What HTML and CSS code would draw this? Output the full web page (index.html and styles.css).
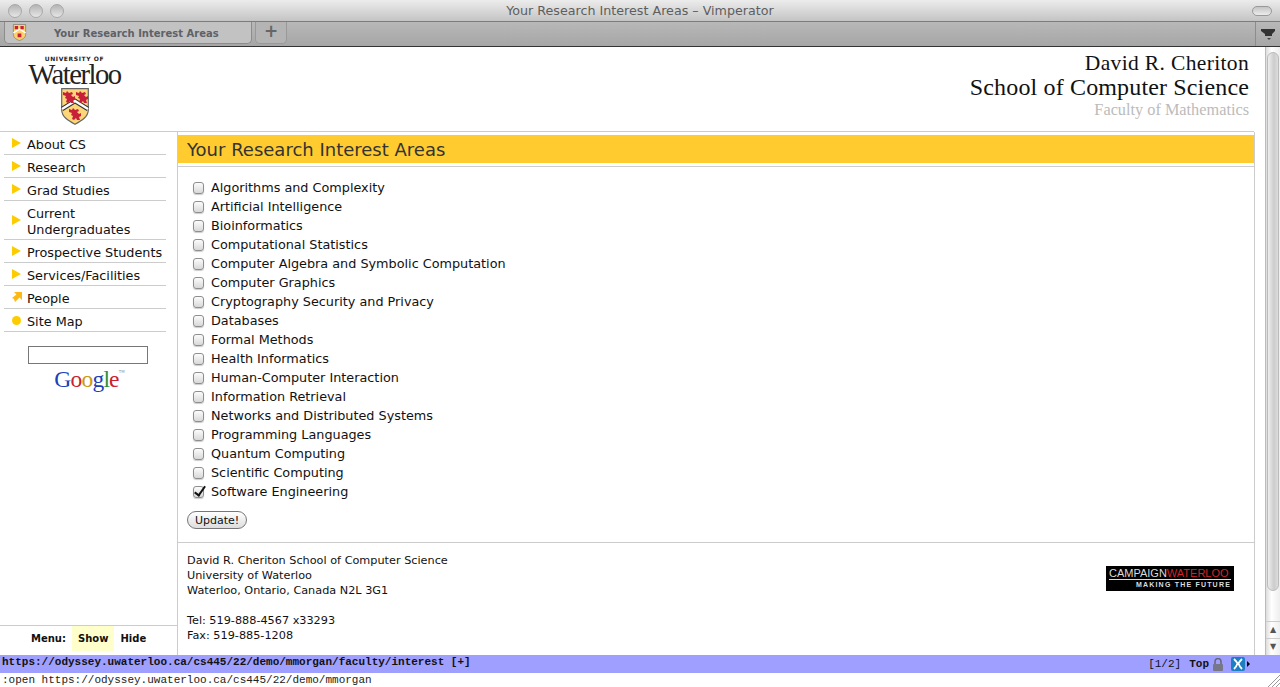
FILE: index.html
```html
<!DOCTYPE html>
<html lang="en">

<head>
    <meta charset="UTF-8">
    <title>Your Research Interest Areas - Vimperator</title>
    <link rel="stylesheet" href="styles.css">
</head>

<body>
    <!-- Window chrome -->
    <div class="titlebar">
        <div class="lights"><span></span><span></span><span></span></div>
        <div class="window-title">Your Research Interest Areas &ndash; Vimperator</div>
        <div class="pill"></div>
    </div>
    <div class="tabbar">
        <div class="tab">
            <svg class="tab-icon" width="15" height="17" viewBox="0 0 28 36">
                <path d="M1 1H27V22C27 29 20 33 14 35C8 33 1 29 1 22Z" fill="#fdd16c" stroke="#777" stroke-width="1.5"/>
                <path d="M1 19L14 11L27 19" fill="none" stroke="#fff" stroke-width="3"/>
                <path d="M4 4h7v7h-7zM16 4h7v7h-7zM10 20h8v8h-8z" fill="#c8203a"/>
            </svg>
            <span class="tab-label">Your Research Interest Areas</span>
        </div>
        <div class="tab-new">+</div>
        <div class="tab-spacer"></div>
        <div class="tab-menu">
            <svg width="15" height="14" viewBox="0 0 15 14"><path d="M0 1H14V3L11 6V8H4V6L0 3Z" fill="#333"/><path d="M6 10h4l-2 2z" fill="#444"/></svg>
        </div>
    </div>

    <div class="viewport">
        <div class="page">
            <!-- Header -->
            <header class="header">
                <div class="logo">
                    <div class="logo-top">UNIVERSITY OF</div>
                    <div class="logo-name">Waterloo</div>
                    <svg class="crest" width="28" height="37" viewBox="0 0 28 37">
                        <defs>
                            <path id="lion" d="M0 1l3 1 1-2 2 2 3-1 1 2-2 1 2 2 2-1 0 3-2 1 1 3-3 0-1-2-2 2-2-1 1-3-2-1 1-2-3-1z"/>
                        </defs>
                        <path d="M.7 .7H27.300V22C27.300 29 20 33 14 36.300C8 33 .7 29 .7 22Z" fill="#fdd678" stroke="#666" stroke-width="1.200"/>
                        <path d="M1 21L14 13L27 21" fill="none" stroke="#333" stroke-width="4.500"/>
                        <path d="M1 21L14 13L27 21" fill="none" stroke="#fff" stroke-width="2.400"/>
                        <use href="#lion" x="2" y="3" fill="#c8203a"/>
                        <use href="#lion" x="15" y="3" fill="#c8203a"/>
                        <use href="#lion" x="8" y="20" fill="#c8203a"/>
                    </svg>
                </div>
                <div class="school">
                    <div class="school-first">David R. Cheriton</div>
                    <div class="school-line">School of Computer Science</div>
                    <div class="faculty">Faculty of Mathematics</div>
                </div>
            </header>

            <div class="columns">
                <!-- Sidebar -->
                <aside class="sidebar">
                    <ul class="nav">
                        <li><span class="arrow"></span><a href="#">About CS</a></li>
                        <li><span class="arrow"></span><a href="#">Research</a></li>
                        <li><span class="arrow"></span><a href="#">Grad Studies</a></li>
                        <li class="nav-tall"><span class="arrow"></span><a href="#">Current Undergraduates</a></li>
                        <li><span class="arrow"></span><a href="#">Prospective Students</a></li>
                        <li><span class="arrow"></span><a href="#">Services/Facilities</a></li>
                        <li>
                            <svg class="nav-icon" width="10" height="10" viewBox="0 0 10 10"><path d="M2 0H10V8L7.500 5.500L3 10L2 7L0 6L4.500 2.500Z" fill="#fdb813"/></svg>
                            <a href="#">People</a>
                        </li>
                        <li><span class="dot"></span><a href="#">Site Map</a></li>
                    </ul>
                    <div class="search">
                        <input type="text" class="search-box">
                        <div class="google"><span class="g-b">G</span><span class="g-r">o</span><span class="g-y">o</span><span class="g-b">g</span><span class="g-g">l</span><span class="g-r">e</span><sup class="g-tm">TM</sup></div>
                    </div>
                    <div class="menu-toggle">
                        <span class="menu-label">Menu:</span>
                        <span class="menu-show">Show</span>
                        <span class="menu-hide">Hide</span>
                    </div>
                </aside>

                <!-- Main content -->
                <main class="content">
                    <h1 class="page-title">Your Research Interest Areas</h1>
                    <form class="areas">
                        <label><input type="checkbox">Algorithms and Complexity</label>
                        <label><input type="checkbox">Artificial Intelligence</label>
                        <label><input type="checkbox">Bioinformatics</label>
                        <label><input type="checkbox">Computational Statistics</label>
                        <label><input type="checkbox">Computer Algebra and Symbolic Computation</label>
                        <label><input type="checkbox">Computer Graphics</label>
                        <label><input type="checkbox">Cryptography Security and Privacy</label>
                        <label><input type="checkbox">Databases</label>
                        <label><input type="checkbox">Formal Methods</label>
                        <label><input type="checkbox">Health Informatics</label>
                        <label><input type="checkbox">Human-Computer Interaction</label>
                        <label><input type="checkbox">Information Retrieval</label>
                        <label><input type="checkbox">Networks and Distributed Systems</label>
                        <label><input type="checkbox">Programming Languages</label>
                        <label><input type="checkbox">Quantum Computing</label>
                        <label><input type="checkbox">Scientific Computing</label>
                        <label><input type="checkbox" checked>Software Engineering</label>
                        <button type="button" class="update">Update!</button>
                    </form>
                    <footer class="footer">
                        <div class="address">
                            David R. Cheriton School of Computer Science<br>
                            University of Waterloo<br>
                            Waterloo, Ontario, Canada N2L 3G1<br>
                            <br>
                            Tel: 519-888-4567 x33293<br>
                            Fax: 519-885-1208
                        </div>
                        <div class="campaign">
                            <div class="campaign-top">CAMPAIGN<b>WATERLOO</b></div>
                            <div class="campaign-sub">MAKING THE FUTURE</div>
                        </div>
                    </footer>
                </main>
            </div>
        </div>

        <!-- Scrollbar -->
        <div class="scrollbar">
            <div class="scroll-thumb"></div>
            <div class="scroll-btn">&#9650;</div>
            <div class="scroll-btn">&#9660;</div>
        </div>
    </div>

    <!-- Vimperator status and command lines -->
    <div class="statusbar">
        <span class="status-url">https://odyssey.uwaterloo.ca/cs445/22/demo/mmorgan/faculty/interest [+]</span>
        <span class="status-right">
            <span class="status-pos">[1/2]</span>
            <span class="status-top">Top</span>
            <svg width="10" height="13" viewBox="0 0 10 13"><path d="M2 6V3.500a3 3 0 0 1 6 0V6" fill="none" stroke="#667" stroke-width="1.500"/><rect y="6" width="10" height="7" rx="1" fill="#778"/></svg>
            <svg class="status-x" width="14" height="14" viewBox="0 0 14 14"><rect width="14" height="14" rx="2" fill="#1c7fc4"/><path d="M3 2C5 4 6 5 6.500 6.500C6 8 5 10 3 12M11 2C9 4 8 5 7.500 6.500C8 8 9 10 11 12" fill="none" stroke="#fff" stroke-width="1.800"/></svg>
            <span class="status-caret"></span>
        </span>
    </div>
    <div class="cmdline">
        <span>:open https://odyssey.uwaterloo.ca/cs445/22/demo/mmorgan</span>
        <svg class="grip" width="12" height="12" viewBox="0 0 12 12"><path d="M0 12L12 0M4 12L12 4M8 12L12 8" stroke="#999" fill="none"/></svg>
    </div>
</body>

</html>
```

FILE: styles.css
```css
/* Base styles */
html,
body {
    height: 100%;
}

body {
    margin: 0;
    display: flex;
    flex-direction: column;
    height: 687px;
    overflow: hidden;
    background-color: #fff;
    color: #111;
    font-family: "DejaVu Sans", Verdana, sans-serif;
}

/* Title bar */
.titlebar {
    height: 21px;
    flex: none;
    display: flex;
    align-items: center;
    justify-content: space-between;
    padding: 0 8px;
    background: linear-gradient(#ececec, #c4c4c4);
    border-bottom: 1px solid #7c7c7c;
}

.lights {
    display: flex;
    gap: 7px;
    width: 200px;
}

.lights span {
    width: 12px;
    height: 12px;
    border: 1px solid #a8a8a8;
    border-radius: 50%;
    background: linear-gradient(#b4b4b4, #e6e6e6);
}

.window-title {
    font-size: 12.700px;
    color: #5e5e5e;
}

.pill {
    width: 18px;
    height: 8px;
    border: 1px solid #999;
    border-radius: 5px;
    background: linear-gradient(#c4c4c4, #ececec);
}

.lights + .window-title {
    flex: 1;
    text-align: center;
    padding-right: 180px;
}

/* Tab bar */
.tabbar {
    height: 24px;
    flex: none;
    display: flex;
    background: linear-gradient(#b8b8b8, #a6a6a6);
    border-bottom: 1px solid #333;
}

.tab {
    width: 246px;
    height: 21px;
    margin-left: 4px;
    display: flex;
    align-items: center;
    border: 1px solid #8c8c8c;
    border-top: 0;
    border-radius: 0 0 5px 5px;
    background-color: #c2c2c2;
}

.tab-icon {
    margin-left: 7px;
}

.tab-label {
    margin: 1px 0 0 27px;
    font-size: 10px;
    font-weight: 700;
    color: #5d6168;
}

.tab-new {
    width: 30px;
    height: 21px;
    margin-left: 3px;
    text-align: center;
    font-size: 17px;
    line-height: 19px;
    font-weight: 700;
    color: #666;
    border: 1px solid #999;
    border-top: 0;
    border-radius: 0 0 5px 5px;
    background-color: #b4b4b4;
}

.tab-spacer {
    flex: 1;
}

.tab-menu {
    width: 25px;
    padding: 5px 0 0 5px;
    box-sizing: border-box;
    border-left: 1px solid #8c8c8c;
}

/* Viewport */
.viewport {
    flex: 1;
    min-height: 0;
    display: flex;
}

.page {
    flex: 1;
    min-width: 0;
    display: flex;
    flex-direction: column;
}

/* Header */
.header {
    height: 84px;
    width: 1254px;
    flex: none;
    display: flex;
    justify-content: space-between;
    border-bottom: 1px solid #ccc;
}

.logo {
    width: 149px;
    display: flex;
    flex-direction: column;
    align-items: center;
    padding-top: 8px;
}

.logo-top {
    font-size: 6px;
    font-weight: 700;
    letter-spacing: 0.600px;
    line-height: 8px;
    color: #222;
}

.logo-name {
    font-family: "Liberation Serif", serif;
    font-size: 28.700px;
    line-height: 23px;
    letter-spacing: -1.500px;
    color: #222;
}

.crest {
    margin-top: 2px;
}

.school {
    padding: 5px 5px 0 0;
    text-align: right;
    font-family: "Liberation Serif", serif;
}

.school-first {
    font-size: 21.500px;
    line-height: 23px;
    letter-spacing: 0.350px;
    color: #111;
}

.school-line {
    font-size: 24px;
    line-height: 24px;
    letter-spacing: 0.150px;
    color: #111;
}

.faculty {
    margin-top: 1px;
    font-size: 16.300px;
    line-height: 20px;
    color: #bbb;
}

/* Columns */
.columns {
    flex: 1;
    min-height: 0;
    display: flex;
}

/* Sidebar */
.sidebar {
    width: 177px;
    flex: none;
    display: flex;
    flex-direction: column;
    border-right: 1px solid #ccc;
}

.nav {
    list-style: none;
    margin: 0;
    padding: 0 0 0 4px;
    width: 162px;
}

.nav li {
    display: flex;
    align-items: center;
    position: relative;
    padding: 5px 0 1px 23px;
    min-height: 16px;
    line-height: 16px;
    font-size: 12.800px;
    border-bottom: 1px solid #ccc;
}

.nav a {
    color: #111;
    text-decoration: none;
}

.arrow {
    position: absolute;
    left: 8px;
    top: 50%;
    margin-top: -5px;
    border-left: 9px solid #fdcc00;
    border-top: 5px solid transparent;
    border-bottom: 5px solid transparent;
}

.nav-icon {
    position: absolute;
    left: 8px;
    top: 6px;
}

.dot {
    position: absolute;
    left: 8px;
    top: 7px;
    width: 9px;
    height: 9px;
    border-radius: 50%;
    background-color: #fdcc00;
}

.search {
    display: flex;
    flex-direction: column;
    align-items: center;
    padding: 14px 2px 0 0;
}

.search-box {
    width: 120px;
    height: 18px;
    padding: 0;
    box-sizing: border-box;
    border: 1px solid #777;
    background-color: #fff;
}

.google {
    padding-left: 4px;
    font-family: "Liberation Serif", serif;
    font-size: 23.500px;
    line-height: 30px;
    letter-spacing: -0.800px;
}

.g-b { color: #1c3fb8; }
.g-r { color: #c8232c; }
.g-y { color: #c99a12; }
.g-g { color: #2d8f3a; }

.g-tm {
    font-family: "DejaVu Sans", sans-serif;
    font-size: 4px;
    color: #999;
    vertical-align: 14px;
    line-height: 0;
    letter-spacing: 0;
}

.menu-toggle {
    margin-top: auto;
    height: 29px;
    display: flex;
    padding-left: 31px;
    border-top: 1px solid #ccc;
    font-size: 10px;
    font-weight: 700;
    line-height: 25px;
}

.menu-label {
    margin-right: 6px;
}

.menu-show {
    height: 25px;
    padding: 0 6px;
    background-color: #ffffcc;
}

.menu-hide {
    margin-left: 6px;
}

/* Main content */
.content {
    width: 1076px;
    flex: none;
    display: flex;
    flex-direction: column;
    border-right: 1px solid #ccc;
}

.page-title {
    margin: 3px 0 0;
    height: 28px;
    padding-left: 9px;
    line-height: 29px;
    font-size: 18px;
    font-weight: 400;
    color: #333;
    background-color: #ffcb2f;
}

.areas {
    margin-top: 3px;
    padding: 11px 0 13px 10px;
    display: flex;
    flex-direction: column;
    align-items: flex-start;
    border-top: 1px solid #ccc;
    border-bottom: 1px solid #ccc;
}

.areas label {
    display: flex;
    align-items: center;
    height: 19px;
    font-size: 12.800px;
}

/* Aqua style checkboxes */
.areas input {
    appearance: none;
    position: relative;
    width: 11px;
    height: 12px;
    margin: 0 7px 0 5px;
    border: 1px solid #8e8e8e;
    border-radius: 3px;
    background: linear-gradient(#fcfcfc, #d8d8d8);
    box-shadow: 0 1px 1px rgba(0, 0, 0, 0.2);
}

.areas input:checked::after {
    content: "";
    position: absolute;
    left: 3px;
    top: -3px;
    width: 4px;
    height: 10px;
    border-right: 2px solid #111;
    border-bottom: 2px solid #111;
    transform: rotate(35deg);
}

.update {
    margin-top: 10px;
    height: 18px;
    width: 60px;
    margin-left: -1px;
    padding: 0;
    font-family: "DejaVu Sans", Verdana, sans-serif;
    font-size: 11px;
    color: #111;
    border: 1px solid #777;
    border-radius: 9px;
    background: linear-gradient(#fff, #ddd);
}

/* Footer */
.footer {
    display: flex;
    justify-content: space-between;
    padding: 10px 20px 0 9px;
}

.address {
    font-size: 11.250px;
    line-height: 15px;
}

.campaign {
    width: 128px;
    height: 25px;
    margin-top: 13px;
    box-sizing: border-box;
    padding: 3px 3px 0;
    background-color: #000;
    color: #ddd;
    font-family: "Liberation Sans", sans-serif;
}

.campaign-top {
    font-size: 11px;
    line-height: 9px;
    padding-bottom: 1px;
    border-bottom: 1px solid #ddd;
    white-space: nowrap;
}

.campaign-top b {
    font-weight: 400;
    color: #d2232a;
}

.campaign-sub {
    font-size: 7px;
    font-weight: 700;
    line-height: 10px;
    letter-spacing: 1.200px;
    text-align: right;
}

/* Scrollbar */
.scrollbar {
    width: 15px;
    flex: none;
    margin-left: 11px;
    display: flex;
    flex-direction: column;
    background: linear-gradient(90deg, #ddd, #fff 40%, #eee);
    border-left: 1px solid #bbb;
    box-sizing: border-box;
}

.scroll-thumb {
    flex: 1;
    margin: 5px 1px 30px;
    border: 1px solid #bbb;
    border-radius: 7px;
    background: linear-gradient(90deg, #eee, #ccc 60%, #ddd);
}

.scroll-btn {
    height: 16px;
    font-size: 8px;
    line-height: 16px;
    text-align: center;
    color: #555;
    border-top: 1px solid #ccc;
}

/* Status bar */
.statusbar {
    height: 18px;
    flex: none;
    display: flex;
    justify-content: space-between;
    padding: 0 30px 0 2px;
    background-color: #9f9fff;
    font-family: "Liberation Mono", monospace;
    font-size: 11px;
    font-weight: 700;
    line-height: 15px;
    color: #111;
}

.status-right {
    display: flex;
    align-items: center;
    gap: 5px;
}

.status-pos {
    font-weight: 400;
    margin-right: 3px;
}

.status-top {
    margin-right: -1px;
}

.status-x {
    margin-left: 3px;
}

.status-caret {
    margin-left: -3px;
    border-left: 3px solid #000;
    border-top: 3px solid transparent;
    border-bottom: 3px solid transparent;
}

/* Command line */
.cmdline {
    height: 14px;
    flex: none;
    display: flex;
    justify-content: space-between;
    padding-left: 2px;
    font-family: "Liberation Mono", monospace;
    font-size: 11px;
    line-height: 14px;
    color: #222;
}

.grip {
    margin-top: 2px;
}
```
